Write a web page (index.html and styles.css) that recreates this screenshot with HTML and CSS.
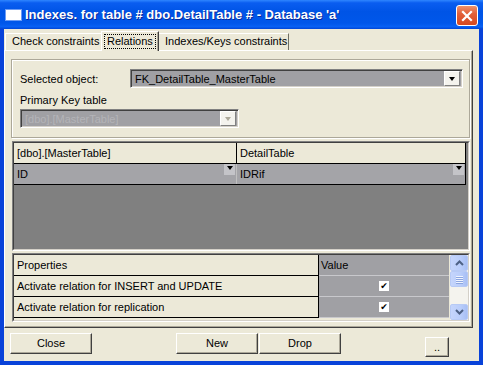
FILE: index.html
```html
<!DOCTYPE html>
<html>

<head>
    <meta charset="utf-8" />
    <title>Indexes</title>
    <link rel="stylesheet" href="styles.css">
</head>

<body>
    <div class="window">
        <div class="titlebar">
            <span class="app-icon"></span>
            <span class="title">Indexes. for table # dbo.DetailTable # - Database 'a'</span>
            <span class="close-x">
                <svg width="14" height="14" viewBox="0 0 14 14">
                    <path d="M3 3 L11 11 M11 3 L3 11" stroke="#fff" stroke-width="2.2" stroke-linecap="square" />
                </svg>
            </span>
        </div>
        <div class="frame">
            <div class="client">
                <div class="tabs">
                    <div class="tab tab-check">Check constraints</div>
                    <div class="tab tab-rel active"><span class="focus">Relations</span></div>
                    <div class="tab tab-idx">Indexes/Keys constraints</div>
                </div>
                <div class="panel">
                    <div class="group">
                        <div class="sel-row">
                            <span class="sel-label">Selected object:</span>
                            <div class="combo combo-sel">
                                <span class="combo-text">FK_DetailTable_MasterTable</span>
                                <span class="drop-btn"><i class="tri"></i></span>
                            </div>
                        </div>
                        <div class="pk-label">Primary Key table</div>
                        <div class="combo combo-off">
                            <span class="combo-text">[dbo].[MasterTable]</span>
                            <span class="drop-btn off"><i class="tri"></i></span>
                        </div>
                    </div>

                    <div class="sunken grid">
                        <div class="sunken-in grid-in">
                            <div class="grid-row grid-head">
                                <div class="cell c1">[dbo].[MasterTable]</div>
                                <div class="cell c2">DetailTable</div>
                            </div>
                            <div class="grid-row grid-data">
                                <div class="cell c1">ID<span class="cell-drop"><i class="tri"></i></span></div>
                                <div class="cell c2">IDRif<span class="cell-drop"><i class="tri"></i></span></div>
                            </div>
                        </div>
                    </div>

                    <div class="sunken props">
                        <div class="sunken-in props-in">
                            <div class="props-table">
                                <div class="prow">
                                    <div class="pname">Properties</div>
                                    <div class="pval head">Value</div>
                                </div>
                                <div class="prow">
                                    <div class="pname">Activate relation for INSERT and UPDATE</div>
                                    <div class="pval"><span class="check">&#10004;</span></div>
                                </div>
                                <div class="prow">
                                    <div class="pname">Activate relation for replication</div>
                                    <div class="pval"><span class="check">&#10004;</span></div>
                                </div>
                            </div>
                            <div class="vscroll">
                                <div class="sb-btn">
                                    <svg width="9" height="6" viewBox="0 0 9 6"><path d="M1 5 L4.5 1.5 L8 5" fill="none" stroke="#4d6185" stroke-width="2" /></svg>
                                </div>
                                <div class="sb-thumb"><i></i><i></i><i></i><i></i></div>
                                <div class="sb-track"></div>
                                <div class="sb-btn">
                                    <svg width="9" height="6" viewBox="0 0 9 6"><path d="M1 1 L4.5 4.5 L8 1" fill="none" stroke="#4d6185" stroke-width="2" /></svg>
                                </div>
                            </div>
                        </div>
                    </div>
                </div>

                <div class="buttons">
                    <div class="btn b-close">Close</div>
                    <div class="btn b-new">New</div>
                    <div class="btn b-drop">Drop</div>
                    <div class="btn b-more">..</div>
                </div>
            </div>
        </div>
    </div>
</body>

</html>
```

FILE: styles.css
```css
* {
    box-sizing: border-box;
}

body {
    margin: 0;
    font-family: "Liberation Sans", Arial, sans-serif;
    font-size: 11px;
    color: #000;
}

.window {
    width: 483px;
    height: 365px;
    display: flex;
    flex-direction: column;
    background: #0842d9;
}

.titlebar {
    height: 29px;
    flex: none;
    display: flex;
    align-items: center;
    padding: 0 5px 0 6px;
    background: linear-gradient(180deg, #2f86ff 0%, #0a5df0 10%, #0054e6 40%, #0057ea 80%, #0861f4 92%, #0045d6 100%);
}

.app-icon {
    width: 15px;
    height: 10px;
    margin: 1px 4px 0 0;
    background: #fff;
    border-top: 2px solid #fff;
    box-shadow: 0 0 0 1px #6b9cf5;
}

.title {
    flex: 1;
    color: #fff;
    font-weight: bold;
    font-size: 13px;
    text-shadow: 1px 1px 0 #0a2a9a;
    white-space: nowrap;
}

.close-x {
    width: 22px;
    height: 21px;
    margin-top: 2px;
    display: flex;
    align-items: center;
    justify-content: center;
    border: 1px solid #fff;
    border-radius: 3px;
    background: linear-gradient(180deg, #f0926c 0%, #e2603a 40%, #d6481f 100%);
}

.frame {
    flex: 1;
    display: flex;
    padding: 0 4px 4px 4px;
}

.client {
    flex: 1;
    background: #ece9d8;
    display: flex;
    flex-direction: column;
}

/* tabs */
.tabs {
    height: 21px;
    display: flex;
    align-items: flex-end;
    padding-left: 1px;
}

.tab {
    height: 17px;
    line-height: 15px;
    padding: 0 0 0 6px;
    border: 1px solid #fff;
    border-right-color: #716f64;
    border-bottom: none;
    white-space: nowrap;
}

.tab-check {
    width: 96px;
    border-right: none;
}

.tab-rel {
    width: 58px;
}

.tab-idx {
    width: 130px;
    border-left: none;
}

.tab.active {
    height: 20px;
    margin-bottom: -1px;
    padding: 2px 2px 0 2px;
    background: #ece9d8;
    position: relative;
    z-index: 1;
    border-right-color: #404040;
    box-shadow: inset -1px 0 #aca899;
}

.focus {
    display: block;
    height: 15px;
    line-height: 13px;
    padding-left: 2px;
    border: 1px dotted #000;
}

/* panel */
.panel {
    height: 278px;
    width: 469px;
    flex: none;
    border: 1px solid;
    border-color: #fff #404040 #404040 #fff;
    box-shadow: inset -1px -1px #aca899;
    padding: 8px 0 0 6px;
}

.group {
    width: 459px;
    height: 79px;
    border: 1px solid #aca899;
    box-shadow: inset 1px 1px #fff, 1px 1px #fff;
    padding: 9px 6px 0 8px;
}

.sel-row {
    display: flex;
    align-items: center;
}

.sel-label {
    width: 110px;
}

.combo {
    height: 19px;
    display: flex;
    align-items: center;
    border: 1px solid;
    border-color: #808080 #fff #fff #808080;
    box-shadow: inset 1px 1px #404040, inset -1px -1px #d4d0c8;
    padding: 2px 2px 2px 4px;
}

.combo-sel {
    flex: 1;
    background: #a0a0a4;
}

.combo-off {
    width: 219px;
    margin-top: 2px;
    background: #a0a0a4;
    color: #b4b4b8;
}

.combo-text {
    flex: 1;
    white-space: nowrap;
    overflow: hidden;
}

.drop-btn {
    width: 16px;
    height: 15px;
    display: flex;
    align-items: center;
    justify-content: center;
    background: #f4f3ee;
    border: 1px solid;
    border-color: #fff #808080 #808080 #fff;
}

.tri {
    width: 0;
    height: 0;
    border-left: 3.5px solid transparent;
    border-right: 3.5px solid transparent;
    border-top: 4px solid #000;
}

.drop-btn.off .tri {
    border-top-color: #aca899;
}

.pk-label {
    margin-top: 5px;
    height: 14px;
    line-height: 14px;
}

/* sunken boxes */
.sunken {
    border: 1px solid;
    border-color: #808080 #fff #fff #808080;
}

.sunken-in {
    height: 100%;
    border: 1px solid;
    border-color: #404040 #d4d0c8 #d4d0c8 #404040;
}

.grid {
    width: 458px;
    height: 110px;
    margin: 3px 0 0 1px;
}

.grid-in {
    background: #808080;
    padding-right: 2px;
}

.grid-row {
    display: flex;
    height: 21px;
    border-bottom: 1px solid #000;
}

.grid-head {
    background: #ece9d8;
}

.grid-data {
    height: 21px;
    background: #a4a4a8;
}

.cell {
    position: relative;
    line-height: 20px;
    padding-left: 3px;
    white-space: nowrap;
}

.c1 {
    width: 223px;
    border-right: 1px solid #000;
}

.grid-data .c1 {
    border-right-color: #c0c0c0;
}

.c2 {
    flex: 1;
    border-right: 1px solid #000;
}

.cell-drop {
    position: absolute;
    right: 1px;
    top: 0;
    width: 11px;
    height: 11px;
    background: #c4c4c8;
    display: flex;
    justify-content: center;
    padding-top: 2px;
}

.props {
    width: 458px;
    height: 69px;
    margin: 2px 0 0 1px;
}

.props-in {
    display: flex;
    background: #ece9d8;
}

.props-table {
    flex: 1;
}

.prow {
    display: flex;
    height: 21px;
    border-bottom: 1px solid #000;
}

.pname {
    width: 305px;
    padding-left: 3px;
    line-height: 20px;
    border-right: 1px solid #000;
    white-space: nowrap;
}

.pval {
    flex: 1;
    background: #a0a0a4;
    display: flex;
    align-items: center;
    justify-content: center;
}

.prow .pval {
    box-shadow: 0 1px #c8c8cc;
}

.pval.head {
    justify-content: flex-start;
    padding-left: 2px;
}

.check {
    width: 10px;
    height: 10px;
    background: #fff;
    font-size: 9px;
    line-height: 10px;
    text-align: center;
    font-family: "DejaVu Sans", sans-serif;
    font-weight: bold;
}

.vscroll {
    width: 18px;
    display: flex;
    flex-direction: column;
    background: #f4f3ee;
    margin-left: 1px;
}

.sb-btn,
.sb-thumb {
    height: 16px;
    border: 1px solid #b7caf5;
    border-radius: 2px;
    background: linear-gradient(90deg, #c5d5fc, #b9cdfa 60%, #a8bff5);
    display: flex;
    align-items: center;
    justify-content: center;
}

.sb-thumb {
    flex-direction: column;
    gap: 1px;
}

.sb-thumb i {
    width: 7px;
    height: 1px;
    background: #eef3ff;
    box-shadow: 0 1px #8ca6e0;
}

.sb-track {
    flex: 1;
}

/* buttons */
.buttons {
    display: flex;
    align-items: flex-start;
    padding: 5px 0 0 6px;
}

.btn {
    height: 21px;
    line-height: 19px;
    text-align: center;
    background: #ece9d8;
    border: 1px solid;
    border-color: #fff #404040 #404040 #fff;
    box-shadow: inset -1px -1px #aca899;
}

.b-close,
.b-new,
.b-drop {
    width: 82px;
}

.b-new {
    margin-left: 84px;
}

.b-drop {
    margin-left: 1px;
}

.b-more {
    width: 24px;
    height: 20px;
    margin: 4px 0 0 84px;
}
```
